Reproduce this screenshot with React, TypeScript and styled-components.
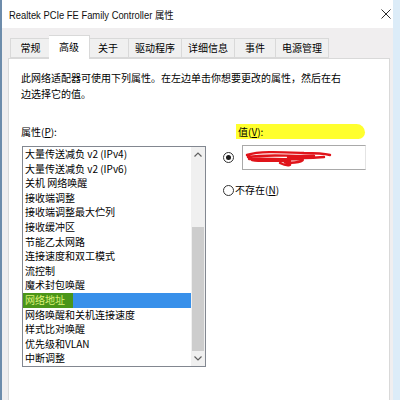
import React from "react";
import styled, { createGlobalStyle } from "styled-components";

const tabs = ["常规", "高级", "关于", "驱动程序", "详细信息", "事件", "电源管理"];

const items = [
  "大量传送减负 v2 (IPv4)",
  "大量传送减负 v2 (IPv6)",
  "关机 网络唤醒",
  "接收端调整",
  "接收端调整最大伫列",
  "接收缓冲区",
  "节能乙太网路",
  "连接速度和双工模式",
  "流控制",
  "魔术封包唤醒",
  "网络地址",
  "网络唤醒和关机连接速度",
  "样式比对唤醒",
  "优先级和VLAN",
  "中断调整",
];

const SELECTED = "网络地址";

export default function App() {
  return (
    <>
      <GlobalStyle />
      <Window>
        <TitleBar>
          <Title>Realtek PCIe FE Family Controller 属性</Title>
          <CloseIcon width="10" height="10" viewBox="0 0 10 10">
            <path d="M0.5 0.5 L9.5 9.5 M9.5 0.5 L0.5 9.5" stroke="#2b2b2b" strokeWidth="1" />
          </CloseIcon>
        </TitleBar>
        <TabStrip>
          {tabs.map((t) => (
            <Tab key={t} $active={t === "高级"}>
              {t}
            </Tab>
          ))}
        </TabStrip>
        <Panel>
          <Description>
            此网络适配器可使用下列属性。在左边单击你想要更改的属性，然后在右边选择它的值。
          </Description>
          <Columns>
            <Label>
              属性(<u>P</u>):
            </Label>
            <ValueLabel>
              值(<u>V</u>):
            </ValueLabel>
            <ListBox>
              <Items>
                {items.map((it) => (
                  <Item key={it} $selected={it === SELECTED}>
                    {it === SELECTED ? <Marked>{it}</Marked> : it}
                  </Item>
                ))}
              </Items>
              <ScrollBar>
                <ArrowButton>
                  <svg width="8" height="5" viewBox="0 0 8 5">
                    <polyline points="0.5,4.5 4,1 7.5,4.5" fill="none" stroke="#606060" strokeWidth="1.2" />
                  </svg>
                </ArrowButton>
                <Track>
                  <Thumb />
                </Track>
                <ArrowButton>
                  <svg width="8" height="5" viewBox="0 0 8 5">
                    <polyline points="0.5,0.5 4,4 7.5,0.5" fill="none" stroke="#606060" strokeWidth="1.2" />
                  </svg>
                </ArrowButton>
              </ScrollBar>
            </ListBox>
            <Options>
              <RadioRow>
                <Radio $checked />
                <TextBox>
                  <svg width="90" height="20" viewBox="0 0 90 20">
                    <path
                      d="M3 7 C 15 3, 35 4, 60 5 C 72 5, 82 6, 86 7 M4 9 C 20 6, 40 8, 70 8 M5 11 C 22 10, 40 12, 58 11 C 62 13, 50 16, 40 14 C 52 17, 44 19, 36 15 M8 12 C 20 14, 30 12, 46 13 M44 9 C 56 11, 70 10, 80 9"
                      fill="none"
                      stroke="#e0141a"
                      strokeWidth="2.4"
                      strokeLinecap="round"
                    />
                  </svg>
                </TextBox>
              </RadioRow>
              <RadioRow $spaced>
                <Radio />
                <OptionText>
                  不存在(<u>N</u>)
                </OptionText>
              </RadioRow>
            </Options>
          </Columns>
        </Panel>
      </Window>
    </>
  );
}

const GlobalStyle = createGlobalStyle`
  html, body {
    margin: 0;
    padding: 0;
    background: #dcecf8;
  }
  body {
    font-family: "Noto Sans CJK SC", "Noto Sans", sans-serif;
    color: #000;
  }
`;

const Window = styled.div`
  width: 391px;
  height: 400px;
  display: flex;
  flex-direction: column;
  background: #f0eeef;
  border-left: 2px solid #6d8cab;
  overflow: hidden;
`;

const TitleBar = styled.div`
  height: 28px;
  flex-shrink: 0;
  display: flex;
  align-items: center;
  justify-content: space-between;
  padding: 0 2px 0 7px;
  background: #fff;
`;

const Title = styled.span`
  font-family: "Liberation Sans", "Noto Sans CJK SC", sans-serif;
  font-size: 9.4px;
  margin-top: 2px;
  color: #111;
  transform: scaleY(1.12);
`;

const CloseIcon = styled.svg`
  margin-right: 0;
`;

const TabStrip = styled.div`
  display: flex;
  align-items: flex-end;
  height: 23px;
  padding: 7px 0 0 8px;
  flex-shrink: 0;
`;

const Tab = styled.div<{ $active?: boolean }>`
  min-width: 41px;
  box-sizing: border-box;
  padding: 0 6px 2px;
  height: ${({ $active }) => ($active ? "24px" : "20px")};
  margin: ${({ $active }) => ($active ? "0 -2px -1px" : "0")};
  position: relative;
  z-index: ${({ $active }) => ($active ? 2 : 1)};
  display: flex;
  align-items: center;
  justify-content: center;
  font-size: 10px;
  background: ${({ $active }) => ($active ? "#fff" : "#f0f0f0")};
  border: 1px solid #d9d9d9;
  border-bottom: ${({ $active }) => ($active ? "none" : "1px solid #d9d9d9")};
  & + & {
    border-left: none;
  }
`;

const Panel = styled.div`
  flex: 1;
  margin: 0 3px 0 6px;
  background: #fff;
  border: 1px solid #d9d9d9;
  border-bottom: none;
  padding: 11px 12px 0;
`;

const Description = styled.div`
  font-size: 10px;
  line-height: 16px;
  max-width: 326px;
`;

const Columns = styled.div`
  display: grid;
  grid-template-columns: 185px 1fr;
  column-gap: 16px;
  row-gap: 6px;
  margin-top: 22px;
`;

const Label = styled.div`
  font-size: 10px;
  line-height: 16px;
  u {
    text-underline-offset: 1px;
  }
`;

const ValueLabel = styled(Label)`
  margin-left: 14px;
  padding-left: 2px;
  width: 127px;
  height: 15px;
  background: #ffff2e;
  border-radius: 0 9px 7px 0;
`;

const ListBox = styled.div`
  margin-left: 1px;
  height: 221px;
  box-sizing: border-box;
  border: 1px solid #828790;
  display: flex;
`;

const Items = styled.div`
  flex: 1;
  display: flex;
  flex-direction: column;
`;

const Item = styled.div<{ $selected?: boolean }>`
  height: 14.6px;
  line-height: 14.6px;
  font-size: 10px;
  padding-left: 2px;
  white-space: nowrap;
  background: ${({ $selected }) => ($selected ? "#3890ea" : "transparent")};
`;

const Marked = styled.span`
  display: inline-block;
  margin-left: -2px;
  padding: 0 8px 0 2px;
  height: 14.6px;
  background: #4a9519;
  color: #dff27a;
`;

const ScrollBar = styled.div`
  width: 14px;
  display: flex;
  flex-direction: column;
  background: #f0f0f0;
`;

const ArrowButton = styled.div`
  height: 15px;
  flex-shrink: 0;
  display: flex;
  align-items: center;
  justify-content: center;
`;

const Track = styled.div`
  flex: 1;
  display: flex;
  flex-direction: column;
  justify-content: flex-end;
  padding: 0 1px;
`;

const Thumb = styled.div`
  height: 124px;
  background: #cdcdcd;
`;

const Options = styled.div`
  display: flex;
  flex-direction: column;
  padding-left: 1px;
`;

const RadioRow = styled.div<{ $spaced?: boolean }>`
  display: flex;
  align-items: center;
  margin-top: ${({ $spaced }) => ($spaced ? "12px" : "-1px")};
`;

const Radio = styled.div<{ $checked?: boolean }>`
  width: 11px;
  height: 11px;
  box-sizing: border-box;
  border-radius: 50%;
  border: 1px solid #333;
  background: #fff;
  display: flex;
  align-items: center;
  justify-content: center;
  flex-shrink: 0;
  &::after {
    content: "";
    width: 5px;
    height: 5px;
    border-radius: 50%;
    background: ${({ $checked }) => ($checked ? "#1a1a1a" : "transparent")};
  }
`;

const TextBox = styled.div`
  margin-left: 8px;
  width: 124px;
  height: 25px;
  box-sizing: border-box;
  border: 1px solid #a9a9a9;
  border-right-color: #e4e4e4;
  display: flex;
  align-items: center;
  padding-left: 1px;
`;

const OptionText = styled.span`
  font-size: 10px;
  line-height: 16px;
  margin-left: 1px;
`;
